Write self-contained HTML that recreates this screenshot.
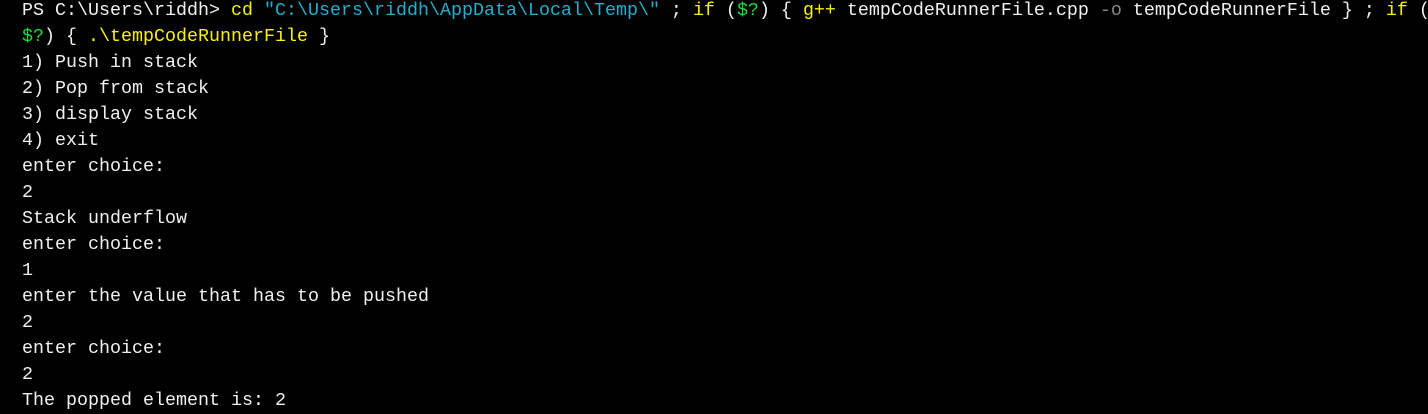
<!DOCTYPE html><html><head><style>
body{margin:0;background:#000;width:1428px;height:412px;overflow:hidden}
pre{margin:0;position:absolute;left:22px;top:-2px;font-family:"Liberation Mono",monospace;font-size:18.33px;line-height:26px;color:#f0f0f0;white-space:pre}
.y{color:#f9f100}.c{color:#1fb0d0}.g{color:#16e03a}.d{color:#888}
</style></head><body><pre>PS C:\Users\riddh&gt; <span class="y">cd</span> <span class="c">"C:\Users\riddh\AppData\Local\Temp\"</span> ; <span class="y">if</span> (<span class="g">$?</span>) { <span class="y">g++</span> tempCodeRunnerFile.cpp <span class="d">-o</span> tempCodeRunnerFile } ; <span class="y">if</span> (
<span class="g">$?</span>) { <span class="y">.\tempCodeRunnerFile</span> }
1) Push in stack
2) Pop from stack
3) display stack
4) exit
enter choice:
2
Stack underflow
enter choice:
1
enter the value that has to be pushed
2
enter choice:
2
The popped element is: 2</pre></body></html>
